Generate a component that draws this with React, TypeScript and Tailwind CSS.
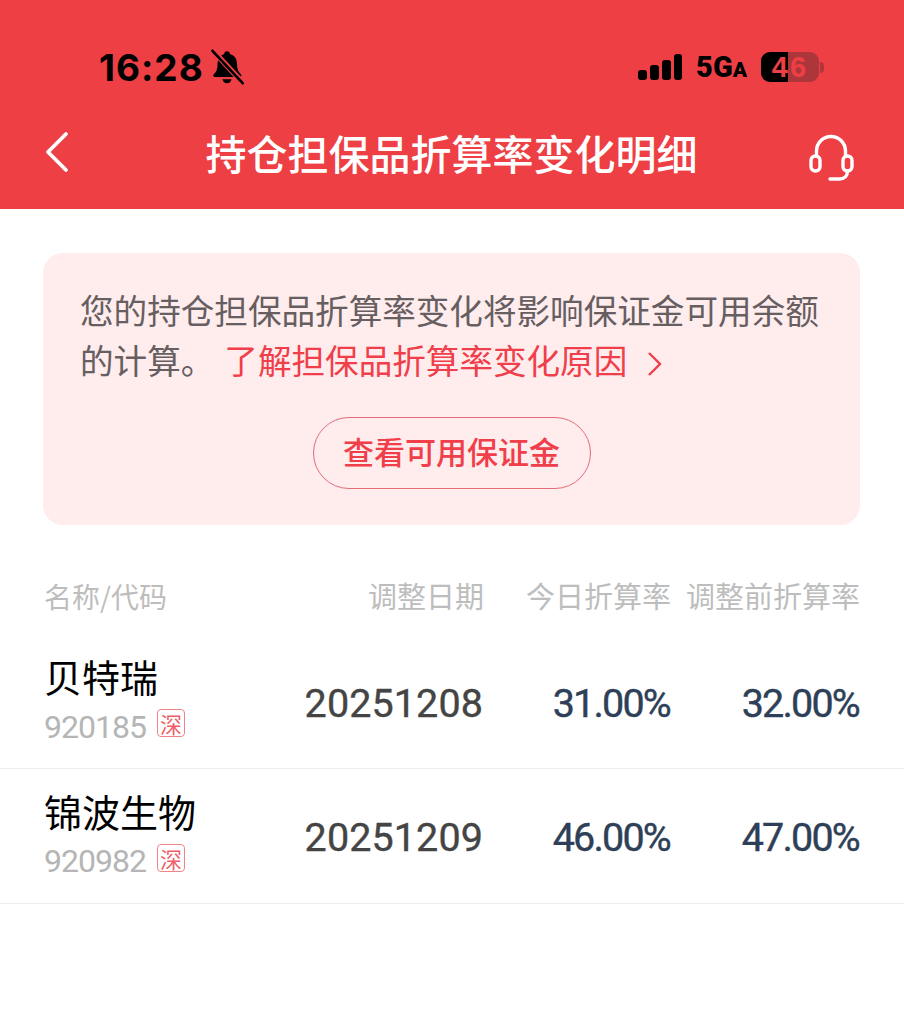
import React from "react";

const cjk = "font-['Noto_Sans_CJK_SC','Noto_Sans',sans-serif]";
const din = "font-['Roboto','Noto_Sans_CJK_SC',sans-serif]";

const rows = [
  { name: "贝特瑞", code: "920185", date: "20251208", today: "31.00%", before: "32.00%" },
  { name: "锦波生物", code: "920982", date: "20251209", today: "46.00%", before: "47.00%" },
];

function Bell() {
  return (
    <svg width="38" height="38" viewBox="0 0 34 34" className="ml-[4px]">
      <path d="M17 3c1.500 0 2.500 1 2.600 2.400 4.400 1.200 6.400 4.800 6.400 9.600 0 4 1.200 6.500 3.600 8.800.7.800.2 2.200-1 2.200H6c-1.200 0-1.700-1.400-1-2.200C7.400 21.500 8.500 19 8.500 15c0-4.800 2.100-8.400 6-9.600C14.600 4 15.500 3 17 3z" fill="#000" />
      <path d="M13 28h8c-.4 2.200-2 3.500-4 3.500s-3.600-1.300-4-3.500z" fill="#000" />
      <path d="M5 3l26 28" stroke="#ed3f44" strokeWidth="5" />
      <path d="M4 2.500l27 29" stroke="#000" strokeWidth="2.400" strokeLinecap="round" />
    </svg>
  );
}

function Signal() {
  return (
    <svg width="46" height="28" viewBox="0 0 46 28">
      <rect x="1" y="17" width="9" height="10" rx="3" fill="#000" />
      <rect x="13" y="12" width="9" height="15" rx="3" fill="#000" />
      <rect x="25" y="7" width="9" height="20" rx="3" fill="#000" />
      <rect x="37" y="1" width="8" height="26" rx="3" fill="#000" />
    </svg>
  );
}

function Battery() {
  return (
    <div className="flex items-center">
      <div className="relative w-[58px] h-[30px] rounded-[9px] bg-[#ad363b] overflow-hidden flex items-center justify-center">
        <div className="absolute left-0 top-0 bottom-0 w-[27px] bg-black" />
        <span className="relative font-['Liberation_Sans',sans-serif] font-bold text-[29px] leading-none tracking-[2px] text-[#ed3f44]">46</span>
      </div>
      <div className="ml-[1px] w-[4px] h-[11px] rounded-r-full bg-[#ad363b]" />
    </div>
  );
}

function Headset() {
  return (
    <svg width="46" height="50" viewBox="0 0 46 50" fill="none" stroke="#fff" strokeWidth="3.400" strokeLinecap="round" strokeLinejoin="round" className="mt-[10px]">
      <path d="M8.500 24v-5a14.500 14.500 0 0 1 29 0v5" />
      <rect x="3" y="24" width="9" height="15" rx="4.500" />
      <rect x="35" y="24" width="9" height="15" rx="4.500" />
      <path d="M39.500 39c0 5-3 8-8 8H22" />
    </svg>
  );
}

function Tag() {
  return (
    <span className={`${cjk} flex items-center justify-center w-[28px] h-[28px] mb-[7px] rounded-[4px] border-[1.500px] border-[#f0838a] text-[#ee5f69] text-[22px] leading-none`}>
      深
    </span>
  );
}

export default function App() {
  return (
    <div className={`${cjk} w-[904px] h-[1024px] bg-white`}>
      <div className="h-[209px] bg-[#ed3f44] flex flex-col">
        <div className="h-[105px] pt-[46px] pl-[99px] pr-[80px] flex items-start justify-between">
          <div className="flex items-center h-[42px]">
            <span className="font-['Inter',sans-serif] font-bold text-[37px] leading-none text-black tracking-[1px]">16:28</span>
            <Bell />
          </div>
          <div className="flex items-center h-[42px]">
            <Signal />
            <span className="ml-[13px] mr-[14px] font-['Roboto',sans-serif] font-black text-[29px] leading-none text-black">
              5G<span className="text-[21px]">A</span>
            </span>
            <Battery />
          </div>
        </div>
        <div className="h-[100px] pl-[44px] pr-[50px] pb-[6px] flex items-center justify-between">
          <svg width="28" height="42" viewBox="0 0 28 42" fill="none" stroke="#fff" strokeWidth="3.800" strokeLinecap="round" strokeLinejoin="round">
            <path d="M22 3L4 21l18 18" />
          </svg>
          <span className="ml-[23px] text-[41px] leading-none font-medium text-white">持仓担保品折算率变化明细</span>
          <Headset />
        </div>
      </div>

      <div className="ml-[43px] mt-[44px] w-[817px] h-[272px] rounded-[20px] bg-[#ffeced] pl-[37px] pt-[32px]">
        <p className="text-[#665e60] text-[33.600px] leading-[50px] whitespace-nowrap">
          您的持仓担保品折算率变化将影响保证金可用余额
          <br />
          的计算。
          <span className="ml-[10px] text-[#f03e4a]">了解担保品折算率变化原因</span>
          <svg width="16" height="26" viewBox="0 0 16 26" fill="none" stroke="#f03e4a" strokeWidth="2.400" className="inline ml-[20px] align-[-3px]">
            <path d="M2 2l11 11L2 24" />
          </svg>
        </p>
        <div className="flex justify-center mt-[32px] pr-[37px]">
          <div className="w-[278px] h-[72px] pb-[5px] rounded-full border border-[#e36c78] flex items-center justify-center text-[#f03e4a] text-[31px] font-medium leading-none">
            查看可用保证金
          </div>
        </div>
      </div>

      <div className="h-[110px] px-[44px] flex items-center pt-[31px] text-[#bdbdbd] text-[29px] leading-none justify-between">
        <span className="w-[250px] text-[28px]">名称/代码</span>
        <div className="flex">
          <span className="w-[190px] text-right">调整日期</span>
          <span className="w-[187px] text-right">今日折算率</span>
          <span className="w-[189px] text-right whitespace-nowrap">调整前折算率</span>
        </div>
      </div>

      <div>
        {rows.map((r) => (
          <div key={r.code} className="h-[135px] border-b border-[#eeeeee] pl-[44px] pr-[45px] flex items-center justify-between first:h-[134px]">
            <div className="w-[250px] flex flex-col pb-[7px]">
              <span className="text-[38px] leading-[48px] text-black">{r.name}</span>
              <div className="flex items-center gap-[11px] mt-[9px]">
                <span className={`${din} text-[32px] leading-[34px] tracking-[-1px] text-[#b5b5b5]`}>{r.code}</span>
                <Tag />
              </div>
            </div>
            <div className={`${din} flex text-[39.500px] leading-none pt-[4px] [-webkit-text-stroke:0.4px]`}>
              <span className="w-[190px] text-right text-[#444444] tracking-[0.100px]">{r.date}</span>
              <span className="w-[187px] text-right text-[#2e4057] tracking-[-1.800px]">{r.today}</span>
              <span className="w-[189px] text-right text-[#2e4057] tracking-[-1.800px]">{r.before}</span>
            </div>
          </div>
        ))}
      </div>
    </div>
  );
}
